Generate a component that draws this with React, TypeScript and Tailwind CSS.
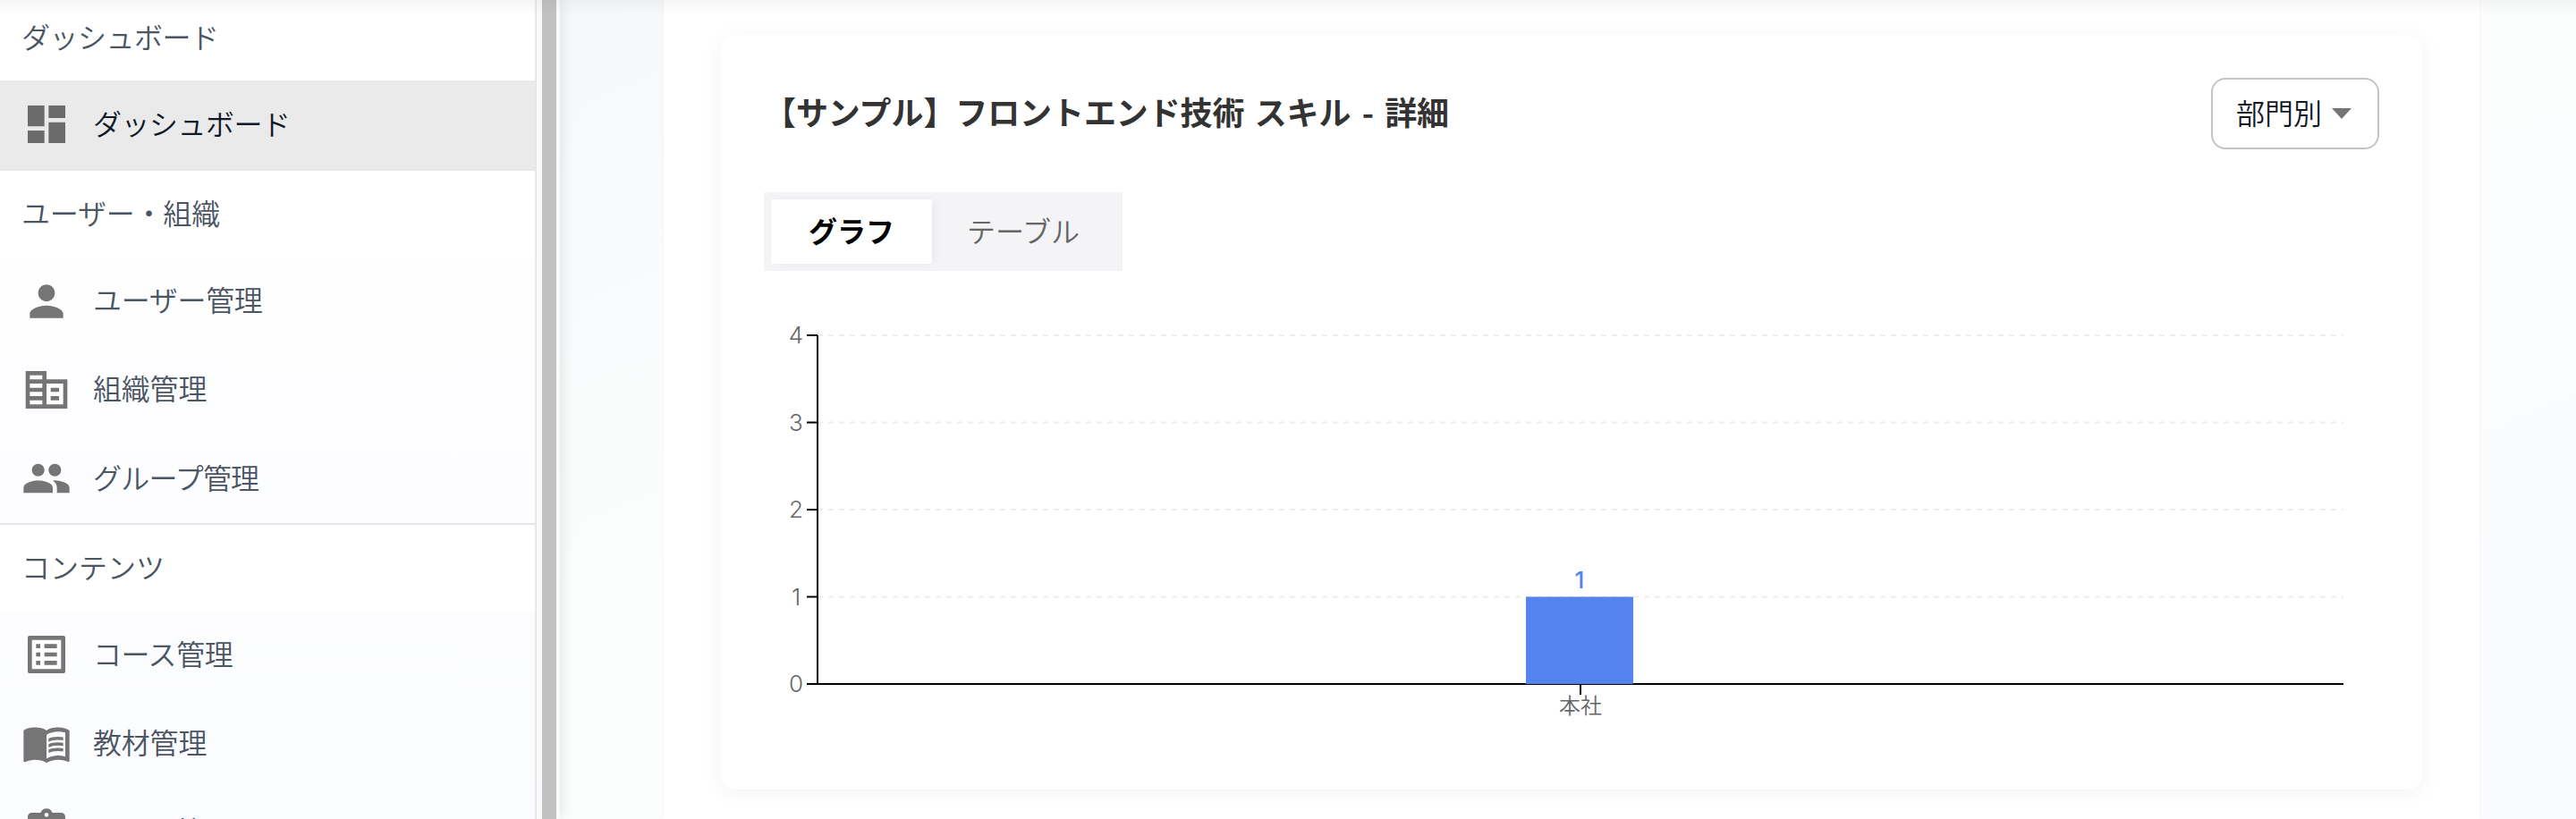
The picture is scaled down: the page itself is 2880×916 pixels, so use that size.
import type { ReactNode } from "react";
import {
  MdDashboard,
  MdPerson,
  MdPeople,
  MdListAlt,
  MdAssignment,
} from "react-icons/md";

const ticks = [4, 3, 2, 1, 0];

function Building() {
  return (
    <svg viewBox="0 0 24 24" className="size-14" fill="currentColor">
      <path d="M12 7V3H2v18h20V7H12zm-2 12H4v-2h6v2zm0-4H4v-2h6v2zm0-4H4V9h6v2zm0-4H4V5h6v2zm10 12h-8V9h8v10zm-2-8h-4v2h4v-2zm0 4h-4v2h4v-2z" />
    </svg>
  );
}

function Book() {
  return (
    <svg viewBox="0 0 24 24" className="size-14" fill="currentColor">
      <path d="M21 5c-1.11-.35-2.33-.5-3.5-.5-1.95 0-4.05.4-5.5 1.5-1.45-1.1-3.55-1.5-5.5-1.5S2.45 4.9 1 6v14.65c0 .25.25.5.5.5.1 0 .15-.05.25-.05C3.1 20.45 5.05 20 6.500 20c1.95 0 4.05.4 5.5 1.500 1.350-.85 3.800-1.500 5.500-1.500 1.650 0 3.350.3 4.750 1.050.1.050.15.050.25.050.25 0 .5-.25.5-.5V6c-.6-.45-1.250-.75-2-1zm0 13.500c-1.100-.35-2.300-.5-3.500-.5-1.700 0-4.150.65-5.500 1.500V8c1.350-.85 3.800-1.500 5.500-1.500 1.200 0 2.400.15 3.500.5v11.500z" />
      <path d="M17.500 10.500c.88 0 1.730.09 2.500.26V9.240c-.79-.15-1.640-.24-2.500-.24-1.700 0-3.240.29-4.500.83v1.660c1.130-.64 2.700-.99 4.500-.99zM13 12.490v1.660c1.130-.64 2.700-.99 4.500-.99.88 0 1.730.09 2.500.26V11.900c-.79-.15-1.640-.24-2.500-.24-1.700 0-3.240.3-4.500.83zM17.500 14.330c-1.700 0-3.240.29-4.500.83v1.660c1.130-.64 2.700-.99 4.500-.99.88 0 1.730.09 2.500.26v-1.520c-.79-.16-1.640-.24-2.500-.24z" />
    </svg>
  );
}

function Heading({ children, size }: { children: ReactNode; size: string }) {
  return (
    <div
      className={
        "flex shrink-0 items-center border-t-2 border-[#e5e7eb] bg-white pb-[5px] pl-6 " + size
      }
    >
      <span className="text-[#4b5563]">{children}</span>
    </div>
  );
}

function Item({
  icon,
  children,
  spacing,
  active,
}: {
  icon: ReactNode;
  children: ReactNode;
  spacing: string;
  active?: boolean;
}) {
  return (
    <div
      className={
        "flex h-[99px] shrink-0 items-center gap-6 pl-6 " +
        (active ? "bg-[#eaeaea] pb-px text-[#6b6b6b]" : "pb-[2px] text-[#757575]")
      }
    >
      {icon}
      <span className={(active ? "text-[#111827] " : "text-[#4b5563] ") + spacing}>
        {children}
      </span>
    </div>
  );
}

function Chart() {
  return (
    <svg width="1800" height="500" viewBox="854 340 1800 500" className="block">
      {ticks.slice(0, 4).map((t) => (
        <line
          key={t}
          x1="914"
          x2="2620"
          y1={765 - t * 97.5}
          y2={765 - t * 97.5}
          stroke="#eeeeee"
          strokeWidth="2"
          strokeDasharray="6 6"
        />
      ))}
      <line x1="914" x2="2620" y1="765" y2="765" stroke="#000" strokeWidth="2" />
      <line x1="914" x2="914" y1="375" y2="765" stroke="#000" strokeWidth="2" />
      {ticks.map((t) => (
        <g key={t}>
          <line
            x1="902"
            x2="914"
            y1={765 - t * 97.5}
            y2={765 - t * 97.5}
            stroke="#000"
            strokeWidth="2"
          />
          <text
            x="890"
            y={765 - t * 97.5 + 9}
            textAnchor="middle"
            fill="#666"
            className="font-['Inter',sans-serif] text-[26px] font-light"
          >
            {t}
          </text>
        </g>
      ))}
      <rect x="1706" y="667.5" width="120" height="97.5" fill="#5383ec" />
      <line x1="1767" x2="1767" y1="766" y2="777" stroke="#000" strokeWidth="2" />
      <text
        x="1766"
        y="658"
        textAnchor="middle"
        fill="#5383ec"
        className="font-['Inter',sans-serif] text-[26px] font-medium"
      >
        1
      </text>
      <text x="1767" y="798" textAnchor="middle" fill="#666" className="text-[24px]">
        本社
      </text>
    </svg>
  );
}

export default function App() {
  return (
    <div className="relative flex h-[916px] w-[2880px] overflow-hidden font-['Noto_Sans_CJK_JP',sans-serif] text-[32px] leading-[48px] font-[350] whitespace-nowrap">
      <aside className="z-10 flex w-[626px] shrink-0 shadow-[0_0_16px_rgba(0,0,0,0.12)]">
        <nav className="flex w-[600px] flex-col overflow-hidden border-r-2 border-[#e5e7e8] bg-linear-to-b from-white to-[#fbfcff]">
          <div className="flex h-[90px] shrink-0 items-center bg-white pb-[11px] pl-6">
            <span className="tracking-[-0.5px] text-[#4b5563]">ダッシュボード</span>
          </div>
          <Item active icon={<MdDashboard className="size-14" />} spacing="pb-[5px] tracking-[-0.5px]">
            ダッシュボード
          </Item>
          <Heading size="h-[99px] tracking-[-0.2px]">ユーザー・組織</Heading>
          <Item icon={<MdPerson className="size-14" />} spacing="pb-[5px] tracking-[-0.3px]">
            ユーザー管理
          </Item>
          <Item icon={<Building />} spacing="pb-[5px] tracking-[-0.2px]">
            組織管理
          </Item>
          <Item icon={<MdPeople className="size-14" />} spacing="pb-1 tracking-[-0.8px]">
            グループ管理
          </Item>
          <Heading size="h-[98px]">コンテンツ</Heading>
          <Item icon={<MdListAlt className="size-14" />} spacing="pb-1 tracking-[-0.4px]">
            コース管理
          </Item>
          <Item icon={<Book />} spacing="pb-1 tracking-[-0.2px]">
            教材管理
          </Item>
          <Item icon={<MdAssignment className="size-14" />} spacing="pb-[3px] tracking-[-0.8px]">
            テスト管理
          </Item>
        </nav>
        <div className="flex w-[26px] bg-[#fafafa] pl-1.5">
          <div className="w-4 bg-[#c1c1c1]" />
        </div>
      </aside>
      <main className="flex flex-1 bg-linear-to-br from-[#f6f8fa] via-[#fcfdfd] via-40% to-[#fafbfe] pl-[116px]">
        <div className="w-[2030px] bg-white px-16 pt-[39px] shadow-[0_0_4px_rgba(0,0,0,0.03)]">
          <section className="flex h-[844px] flex-col rounded-2xl bg-white pt-12 pr-12 pl-12 shadow-[0_4px_24px_rgba(0,0,0,0.05)]">
            <header className="flex h-20 items-center justify-between">
              <h2 className="pb-[6px] text-[36px] font-bold tracking-[-0.1px] text-[#333] [word-spacing:3.2px]">
                【サンプル】フロントエンド技術 スキル <span className="px-px">-</span> 詳細
              </h2>
              <button className="flex h-20 w-[188px] items-center rounded-2xl border-2 border-[#c4c4c4] pl-[26px] text-[#111827]">
                <span className="pb-1">部門別</span>
                <svg width="24" height="12" viewBox="0 0 24 12" className="ml-2.5">
                  <path d="M1 0h22L12 12z" fill="#757575" />
                </svg>
              </button>
            </header>
            <div className="mt-12 flex h-[88px] w-[401px] bg-[#f4f4f6] p-2">
              <div className="flex w-[180px] items-center justify-center bg-white pb-1 font-bold text-black shadow-[4px_0_10px_-2px_rgba(0,0,0,0.06)]">
                グラフ
              </div>
              <div className="flex flex-1 items-center pb-1 pl-[39px] text-[#666]">テーブル</div>
            </div>
            <div className="mt-[37px]">
              <Chart />
            </div>
          </section>
        </div>
      </main>
      <div className="pointer-events-none absolute inset-x-0 top-0 z-20 h-4 bg-linear-to-b from-black/4 to-transparent" />
    </div>
  );
}
